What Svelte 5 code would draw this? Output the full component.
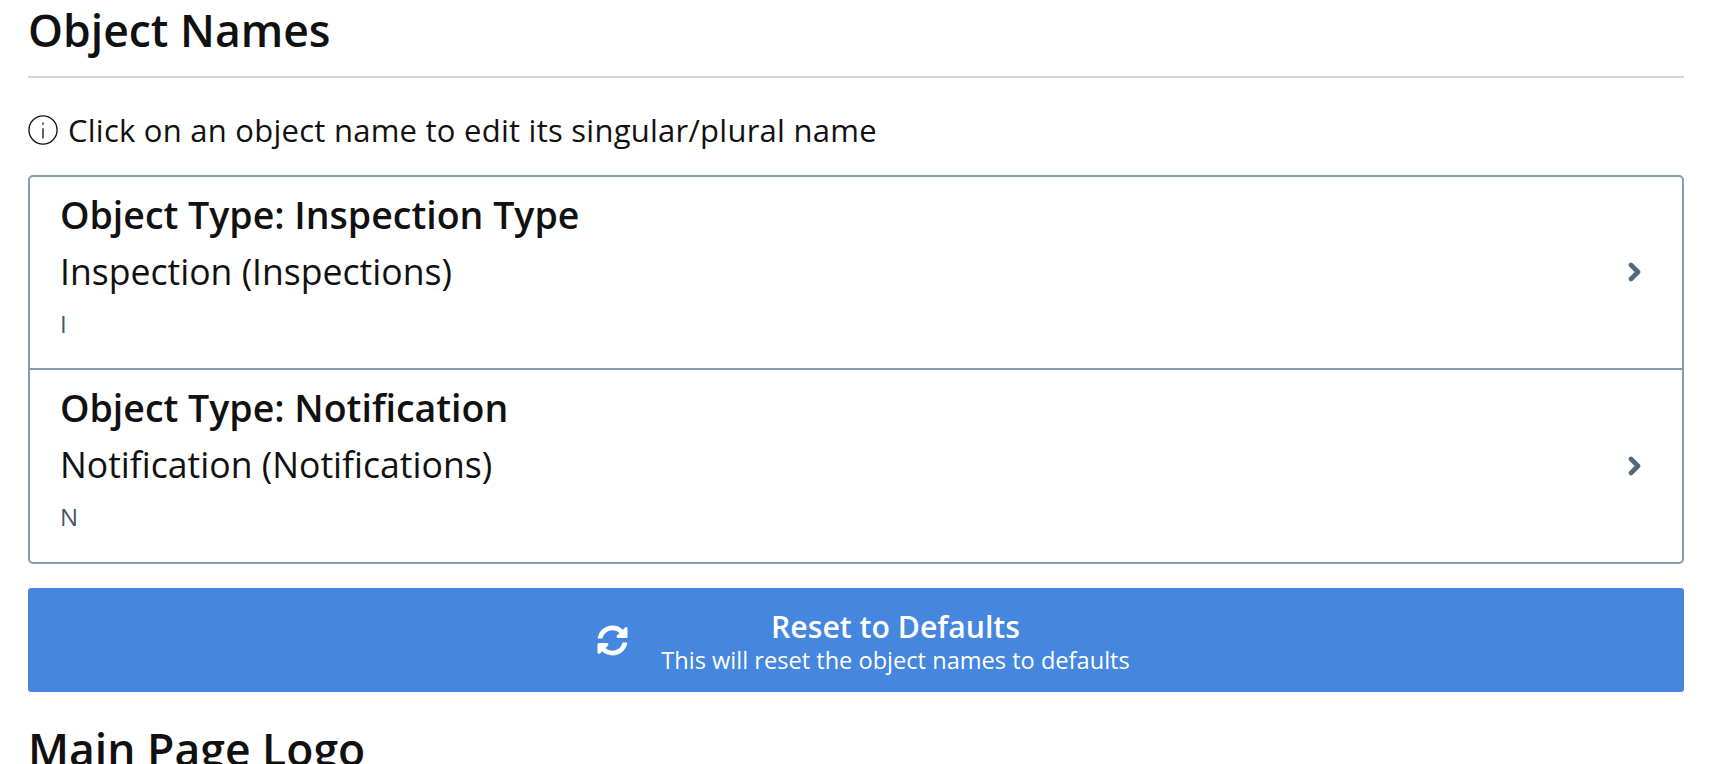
<script>
  const objects = [
    { type: 'Inspection Type', name: 'Inspection (Inspections)', key: 'I' },
    { type: 'Notification', name: 'Notification (Notifications)', key: 'N' }
  ];
</script>

<div class="page">
  <h2 class="section-title">Object Names</h2>

  <p class="hint">
    <svg class="info" viewBox="0 0 32 32" aria-hidden="true">
      <circle cx="16" cy="16" r="15" />
      <line x1="16" y1="14" x2="16" y2="25" />
      <line x1="16" y1="8" x2="16" y2="10.5" />
    </svg>
    Click on an object name to edit its singular/plural name
  </p>

  <div class="list">
    {#each objects as item}
      <div class="row">
        <div class="text">
          <div class="type">Object Type: {item.type}</div>
          <div class="name">{item.name}</div>
          <div class="key">{item.key}</div>
        </div>
        <svg class="chevron" viewBox="0 0 13 20" aria-hidden="true">
          <polyline points="3,3 10,10 3,17" />
        </svg>
      </div>
    {/each}
  </div>

  <button class="reset">
    <svg class="sync" viewBox="0 0 512 512" aria-hidden="true">
      <path d="M370.72 133.28C339.458 104.008 298.888 87.962 255.848 88c-77.458.068-144.328 53.178-162.791 126.85-1.344 5.363-6.122 9.15-11.651 9.15H24.103c-7.498 0-13.194-6.807-11.807-14.176C33.933 94.924 134.813 8 256 8c66.448 0 126.791 26.136 171.315 68.685L463.03 40.97C478.149 25.851 504 36.559 504 57.941V192c0 13.255-10.745 24-24 24H345.941c-21.382 0-32.09-25.851-16.971-40.971l41.75-41.749zM32 296h134.059c21.382 0 32.09 25.851 16.971 40.971l-41.75 41.75c31.262 29.273 71.835 45.319 114.876 45.28 77.418-.07 144.315-53.144 162.787-126.849 1.344-5.363 6.122-9.15 11.651-9.15h57.304c7.498 0 13.194 6.807 11.807 14.176C478.067 417.076 377.187 504 256 504c-66.448 0-126.791-26.136-171.315-68.685L48.97 471.03C33.851 486.149 8 475.441 8 454.059V320c0-13.255 10.745-24 24-24z" />
    </svg>
    <span class="reset-text">
      <span class="reset-title">Reset to Defaults</span>
      <span class="reset-sub">This will reset the object names to defaults</span>
    </span>
  </button>

  <h2 class="section-title next">Main Page Logo</h2>
</div>

<style>
  :global(body) {
    background: #fff;
    overflow: hidden;
  }

  .page {
    height: 764px;
    overflow: hidden;
    padding: 0 38px 0 28px;
    box-sizing: border-box;
    font-family: "Open Sans", "Noto Sans", sans-serif;
    color: #111;
  }

  .section-title {
    margin: 0;
    padding: 0 0 16px;
    font-size: 44.5px;
    line-height: 60px;
    font-weight: 600;
    border-bottom: 2px solid #d0d6db;
  }

  .section-title.next {
    margin-top: 27px;
    border-bottom: none;
  }

  .hint {
    display: flex;
    align-items: center;
    gap: 10px;
    margin: 31px 0 24px;
    font-size: 31px;
    line-height: 42px;
    letter-spacing: 0.25px;
  }

  .info {
    width: 30px;
    height: 30px;
    fill: none;
    stroke: #111;
    stroke-width: 1.4;
  }

  .list {
    border: 2px solid #8a9bab;
    border-radius: 5px;
  }

  .row {
    display: flex;
    align-items: center;
    justify-content: space-between;
    height: 194.5px;
    padding: 0 41px 0 30px;
    box-sizing: border-box;
    border-top: 2px solid #8a9bab;
  }

  .row:first-child {
    height: 190.5px;
    border-top: none;
  }

  .text {
    align-self: flex-start;
    padding-top: 13px;
  }

  .type {
    font-size: 37.5px;
    line-height: 50px;
    font-weight: 600;
  }

  .name {
    font-size: 35.6px;
    line-height: 46px;
    margin-top: 8px;
  }

  .key {
    font-size: 24px;
    line-height: 34px;
    margin-top: 13px;
    color: #44586b;
  }

  .chevron {
    width: 13px;
    height: 20px;
    fill: none;
    stroke: #52687c;
    stroke-width: 4.6;
    stroke-linecap: round;
    stroke-linejoin: round;
  }

  .reset {
    display: flex;
    align-items: center;
    justify-content: center;
    gap: 33px;
    width: 100%;
    height: 104px;
    margin-top: 24px;
    padding: 0 0 0 15px;
    border: none;
    border-radius: 3px;
    background: #4586df;
    color: #fff;
    font-family: inherit;
  }

  .sync {
    width: 31px;
    height: 31px;
    fill: #fff;
  }

  .reset-text {
    display: flex;
    flex-direction: column;
    align-items: center;
  }

  .reset-title {
    font-size: 30.2px;
    line-height: 40px;
    font-weight: 600;
  }

  .reset-sub {
    font-size: 23.6px;
    line-height: 27px;
  }
</style>
